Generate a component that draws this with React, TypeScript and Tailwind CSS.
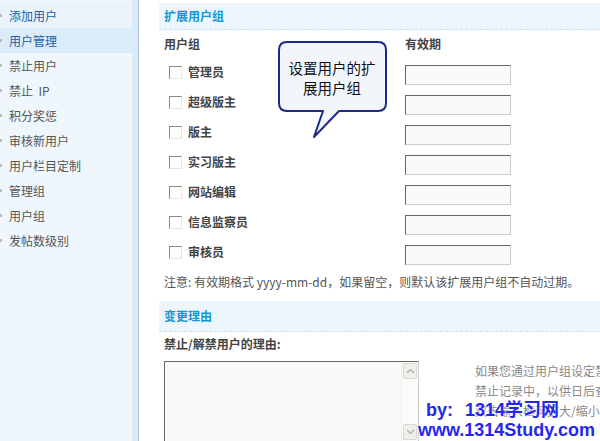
import React from "react";

const menu = [
  "添加用户",
  "用户管理",
  "禁止用户",
  "禁止  IP",
  "积分奖惩",
  "审核新用户",
  "用户栏目定制",
  "管理组",
  "用户组",
  "发帖数级别",
];

const groups = ["管理员", "超级版主", "版主", "实习版主", "网站编辑", "信息监察员", "审核员"];

function Checkbox() {
  return (
    <div className="w-[13px] h-[13px] border border-t-[#8a8a80] border-l-[#8a8a80] border-b-[#e6e6e0] border-r-[#e6e6e0] bg-white" />
  );
}

function Field() {
  return (
    <div className="w-[106px] h-[20px] border border-t-[#666] border-l-[#666] border-b-[#ccc] border-r-[#ccc] bg-[#fafafa]" />
  );
}

export default function App() {
  return (
    <div
      className="relative flex w-[600px] h-[441px] overflow-hidden bg-white text-[12px] leading-none"
      style={{ fontFamily: "'Noto Sans CJK SC', 'Liberation Sans', sans-serif" }}
    >
      <aside className="flex w-[139px] shrink-0 bg-[#f0f7fc]">
        <div className="w-[132px] pt-[3px]">
          {menu.map((m, i) => (
            <div
              key={m}
              className={
                "relative flex items-center h-[25px] pl-[9px] " +
                (i === 0 ? "bg-[#e9f3fb] text-[#1a5ea8]" : i === 1 ? "bg-[#dbecf8] text-[#1a5ea8]" : "text-[#555]")
              }
            >
              <span className="absolute left-0 top-[11px] w-[2px] h-[3px] bg-[#bbb]" />
              <span className="whitespace-pre">{m}</span>
            </div>
          ))}
        </div>
        <div className="w-[6px] bg-[#dde9f4]" />
        <div className="w-[1px] bg-[#a9c5db]" />
      </aside>

      <main className="relative flex-1 pl-[20px] pt-[3px]">
        <div className="h-[27px] flex items-center pl-[5px] bg-[#eef6fd] border-b border-dashed border-[#c6e2f4] font-bold text-[#1497d2]">
          扩展用户组
        </div>
        <div className="pl-[5px]">
          <div className="flex h-[27px] items-center font-bold text-[#444]">
            <div className="w-[241px]">用户组</div>
            <div>有效期</div>
          </div>
          {groups.map((g) => (
            <div key={g} className="flex h-[30px]">
              <div className="w-[241px] flex items-center pl-[5px] gap-[6px] font-bold text-[#444]">
                <Checkbox />
                <span>{g}</span>
              </div>
              <div className="pt-[8px]">
                <Field />
              </div>
            </div>
          ))}
          <div className="h-[30px] flex items-center text-[#555] whitespace-nowrap">
            注意: 有效期格式 yyyy-mm-dd，如果留空，则默认该扩展用户组不自动过期。
          </div>
        </div>
        <div className="mt-[4px] h-[31px] flex items-center pl-[5px] bg-[#eef6fd] border-b border-dashed border-[#c6e2f4] font-bold text-[#1497d2]">
          变更理由
        </div>
        <div className="pl-[5px]">
          <div className="h-[24px] flex items-center font-bold text-[#444]">禁止/解禁用户的理由:</div>
          <div className="flex mt-[5px]">
            <div className="flex shrink-0 w-[255px] h-[81px] border border-t-[#666] border-l-[#666] border-b-[#ccc] border-r-[#ccc] bg-[#fafafa]">
              <div className="flex-1" />
              <div className="w-[17px] flex flex-col justify-between bg-[#fbfbf9] border-l border-[#eee]">
                <div className="h-[16px] m-[1px] flex items-center justify-center border border-[#d8d8d0] bg-[#f0f0ea] rounded-[2px]">
                  <svg width="9" height="6" viewBox="0 0 9 6"><path d="M1 5 L4.5 1.5 L8 5" fill="none" stroke="#b8b8b0" strokeWidth="1.5" /></svg>
                </div>
                <div className="h-[16px] m-[1px] flex items-center justify-center border border-[#d8d8d0] bg-[#f0f0ea] rounded-[2px]">
                  <svg width="9" height="6" viewBox="0 0 9 6"><path d="M1 1 L4.5 4.5 L8 1" fill="none" stroke="#b8b8b0" strokeWidth="1.5" /></svg>
                </div>
              </div>
            </div>
            <div className="ml-[56px] pt-[0px] text-[#888] leading-[20px] whitespace-nowrap">
              <div>如果您通过用户组设定禁止或解禁该用户，请输入简短的理由</div>
              <div>禁止记录中，以供日后查看，同时也将发送短消息给此用户。</div>
              <div>双击输入框可扩大/缩小</div>
            </div>
          </div>
        </div>

        {/* callout */}
        <div className="absolute left-[139px] top-[41px] w-[110px] h-[98px]">
          <svg width="110" height="98" viewBox="0 0 110 98" className="absolute inset-0">
            <path
              d="M9 1 H100 Q108 1 108 9 V62 Q108 70 100 70 H61 L36 96 L45 70 H9 Q1 70 1 62 V9 Q1 1 9 1 Z"
              fill="#f2f6fb"
              stroke="#1c2a86"
              strokeWidth="2"
              strokeLinejoin="round"
            />
          </svg>
          <div className="absolute left-0 top-[17px] w-[108px] text-center text-[14.5px] leading-[20px] text-[#111]">
            <div>设置用户的扩</div>
            <div>展用户组</div>
          </div>
        </div>
      </main>

      {/* watermark */}
      <div
        className="absolute right-[5px] bottom-[1px] text-[#2626ee] font-bold text-[18px] leading-[20px] text-right"
        style={{ fontFamily: "'Liberation Sans', 'Noto Sans CJK SC', sans-serif", textShadow: "0 0 2px #fff, 0 0 2px #fff" }}
      >
        <div className="pr-[36px] flex justify-end gap-[12px]">
          <span>by:</span>
          <span>1314学习网</span>
        </div>
        <div>www.1314Study.com</div>
      </div>
    </div>
  );
}
